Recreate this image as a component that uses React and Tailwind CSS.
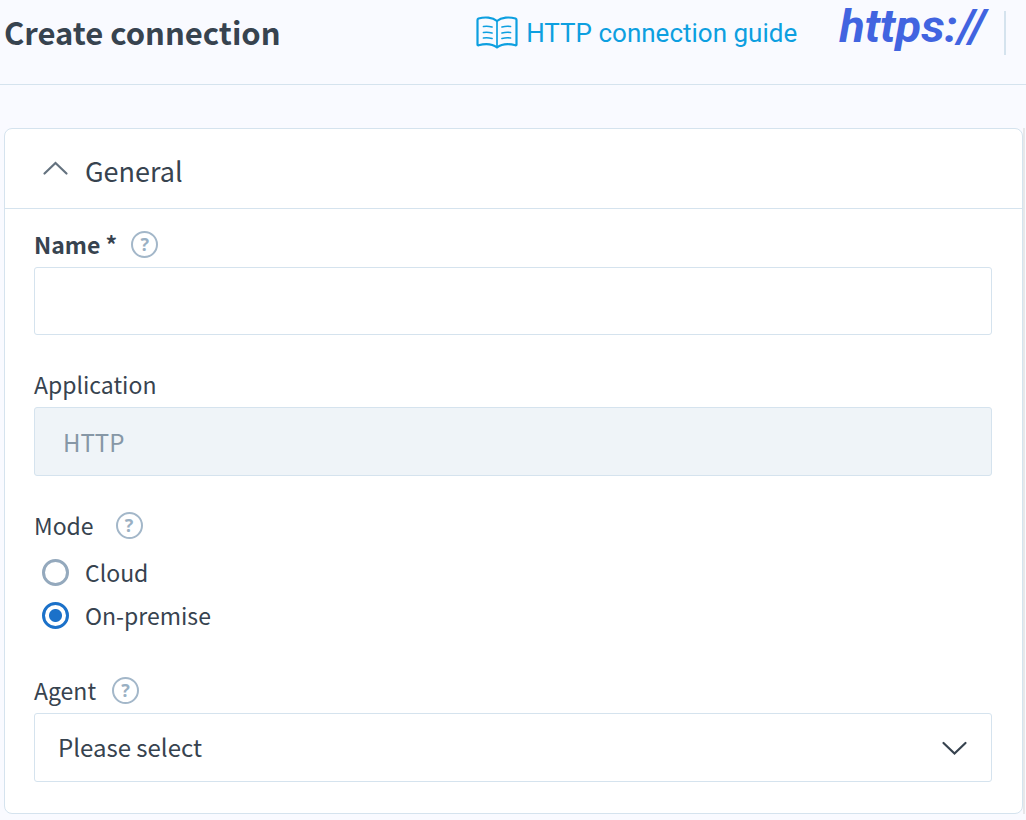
import { useState } from "react";

function HelpButton({ label }) {
  return (
    <button
      type="button"
      aria-label={label}
      className="flex size-[27px] items-center justify-center rounded-full border-2 border-[#a3b7c9] font-['Open_Sans',sans-serif] text-[18px] leading-none font-bold text-[#9ab0c3]"
    >
      ?
    </button>
  );
}

function BookIcon() {
  return (
    <svg viewBox="0 0 42 34" className="h-[34px] w-[42px]" fill="none" stroke="currentColor" strokeLinecap="round" strokeLinejoin="round" aria-hidden="true">
      <path strokeWidth="2.200" d="M21 5C16.5 1 8.500 .8 2.500 2.500Q1.500 3 1.500 4V28.500Q1.500 29.500 2.500 29.300C9 27.500 16.500 28 21 31.500C25.500 28 33 27.500 39.500 29.300Q40.500 29.500 40.500 28.500V4Q40.500 3 39.500 2.500C33.500 .8 25.500 1 21 5Z" />
      <path strokeWidth="1.700" d="M21 5V31M7.500 10.500Q11.500 9.800 16 11M7.500 16.500Q11.500 15.800 16 17M7.500 22Q11.500 21.300 16 22.500M34.500 10.500Q30.500 9.800 26 11M34.500 16.500Q30.500 15.800 26 17M34.500 22Q30.500 21.300 26 22.500" />
    </svg>
  );
}

function ModeOption({ value, label, mode, onChange }) {
  return (
    <label className="flex h-[43px] items-center gap-4">
      <input
        type="radio"
        name="mode"
        value={value}
        checked={mode === value}
        onChange={() => onChange(value)}
        className="size-[27px] appearance-none rounded-full border-[3px] border-[#94a9bd] bg-white checked:border-[#1b71c9] checked:bg-[radial-gradient(circle,#1b71c9_6px,white_7px)]"
      />
      <span className="pb-0.5">{label}</span>
    </label>
  );
}

export default function App() {
  const [mode, setMode] = useState("on-premise");
  const [open, setOpen] = useState(true);

  return (
    <div className="min-h-screen bg-[#f9faff] pb-1.5 font-['Noto_Sans_CJK_SC',sans-serif] text-[23px] leading-8 text-[#37434f]">
      <header className="flex h-[85px] items-start justify-between border-b border-[#d5e3ee] pr-5 pl-1">
        <h1 className="pt-2.5 text-[31px] leading-[44px] font-bold">Create connection</h1>
        <div className="flex items-start">
          <a href="#guide" className="mt-4 mr-[42px] flex items-center gap-2 font-[Roboto,sans-serif] text-[26px] leading-[34px] text-[#0d9fe0]">
            <BookIcon />
            HTTP connection guide
          </a>
          <span className="pr-1 font-[Roboto,sans-serif] text-[47px] leading-[52px] font-bold text-[#4164e0] italic">https://</span>
          <span className="mt-[11px] ml-3.5 h-11 w-0.5 bg-[#d5e3ee]" />
        </div>
      </header>

      <main className="mt-[43px] mr-px border-r-2 border-[#e7e7e9] pl-1">
        <section className="rounded-lg border border-[#d5e3ee] bg-white">
          <h2 className="border-b border-[#d5e3ee]">
            <button type="button" aria-expanded={open} onClick={() => setOpen(!open)} className="flex h-[79px] w-full items-center gap-4 pt-1 pl-[37px] text-[27px] leading-10">
              <svg viewBox="0 0 27 16" className="mb-1.5 h-4 w-[27px]" fill="none" stroke="#64727f" strokeWidth="2.200" strokeLinecap="round" aria-hidden="true">
                <path d={open ? "M2.500 13.500L13.500 3L24.500 13.500" : "M2.500 3L13.500 13.500L24.500 3"} />
              </svg>
              General
            </button>
          </h2>
          {open && (
            <form className="pt-[19px] pr-[30px] pb-[31px] pl-[29px]">
              <div className="flex items-center gap-3.5">
                <label htmlFor="name" className="font-bold">Name *</label>
                <HelpButton label="About name" />
              </div>
              <input id="name" type="text" className="mt-[7px] block h-[68px] w-full rounded-[3px] border border-[#d5e3ee] bg-white px-6" />

              <label htmlFor="application" className="mt-[33px] block">Application</label>
              <input id="application" type="text" disabled value="HTTP" className="mt-[7px] block h-[69px] w-full rounded-[3px] border border-[#d5e3ee] bg-[#eff4f8] px-7 text-[24px] text-[#8697a6]" />

              <fieldset className="mt-[33px]">
                <div className="flex items-center gap-[22px]">
                  <legend>Mode</legend>
                  <HelpButton label="About mode" />
                </div>
                <div className="mt-2.5 pl-2">
                  <ModeOption value="cloud" label="Cloud" mode={mode} onChange={setMode} />
                  <ModeOption value="on-premise" label="On-premise" mode={mode} onChange={setMode} />
                </div>
              </fieldset>

              <div className="mt-[37px] flex items-center gap-4">
                <label htmlFor="agent">Agent</label>
                <HelpButton label="About agent" />
              </div>
              <div className="mt-[7px] grid items-center">
                <select id="agent" className="col-start-1 row-start-1 h-[69px] w-full appearance-none rounded-[3px] border border-[#d5e3ee] bg-white px-[23px] pb-0.5 text-[24px]">
                  <option>Please select</option>
                </select>
                <svg viewBox="0 0 27 16" className="pointer-events-none col-start-1 row-start-1 mr-6 h-4 w-[27px] justify-self-end" fill="none" stroke="#37434f" strokeWidth="2.200" strokeLinecap="round" aria-hidden="true">
                  <path d="M2.500 3L13.500 13.500L24.500 3" />
                </svg>
              </div>
            </form>
          )}
        </section>
      </main>
    </div>
  );
}
